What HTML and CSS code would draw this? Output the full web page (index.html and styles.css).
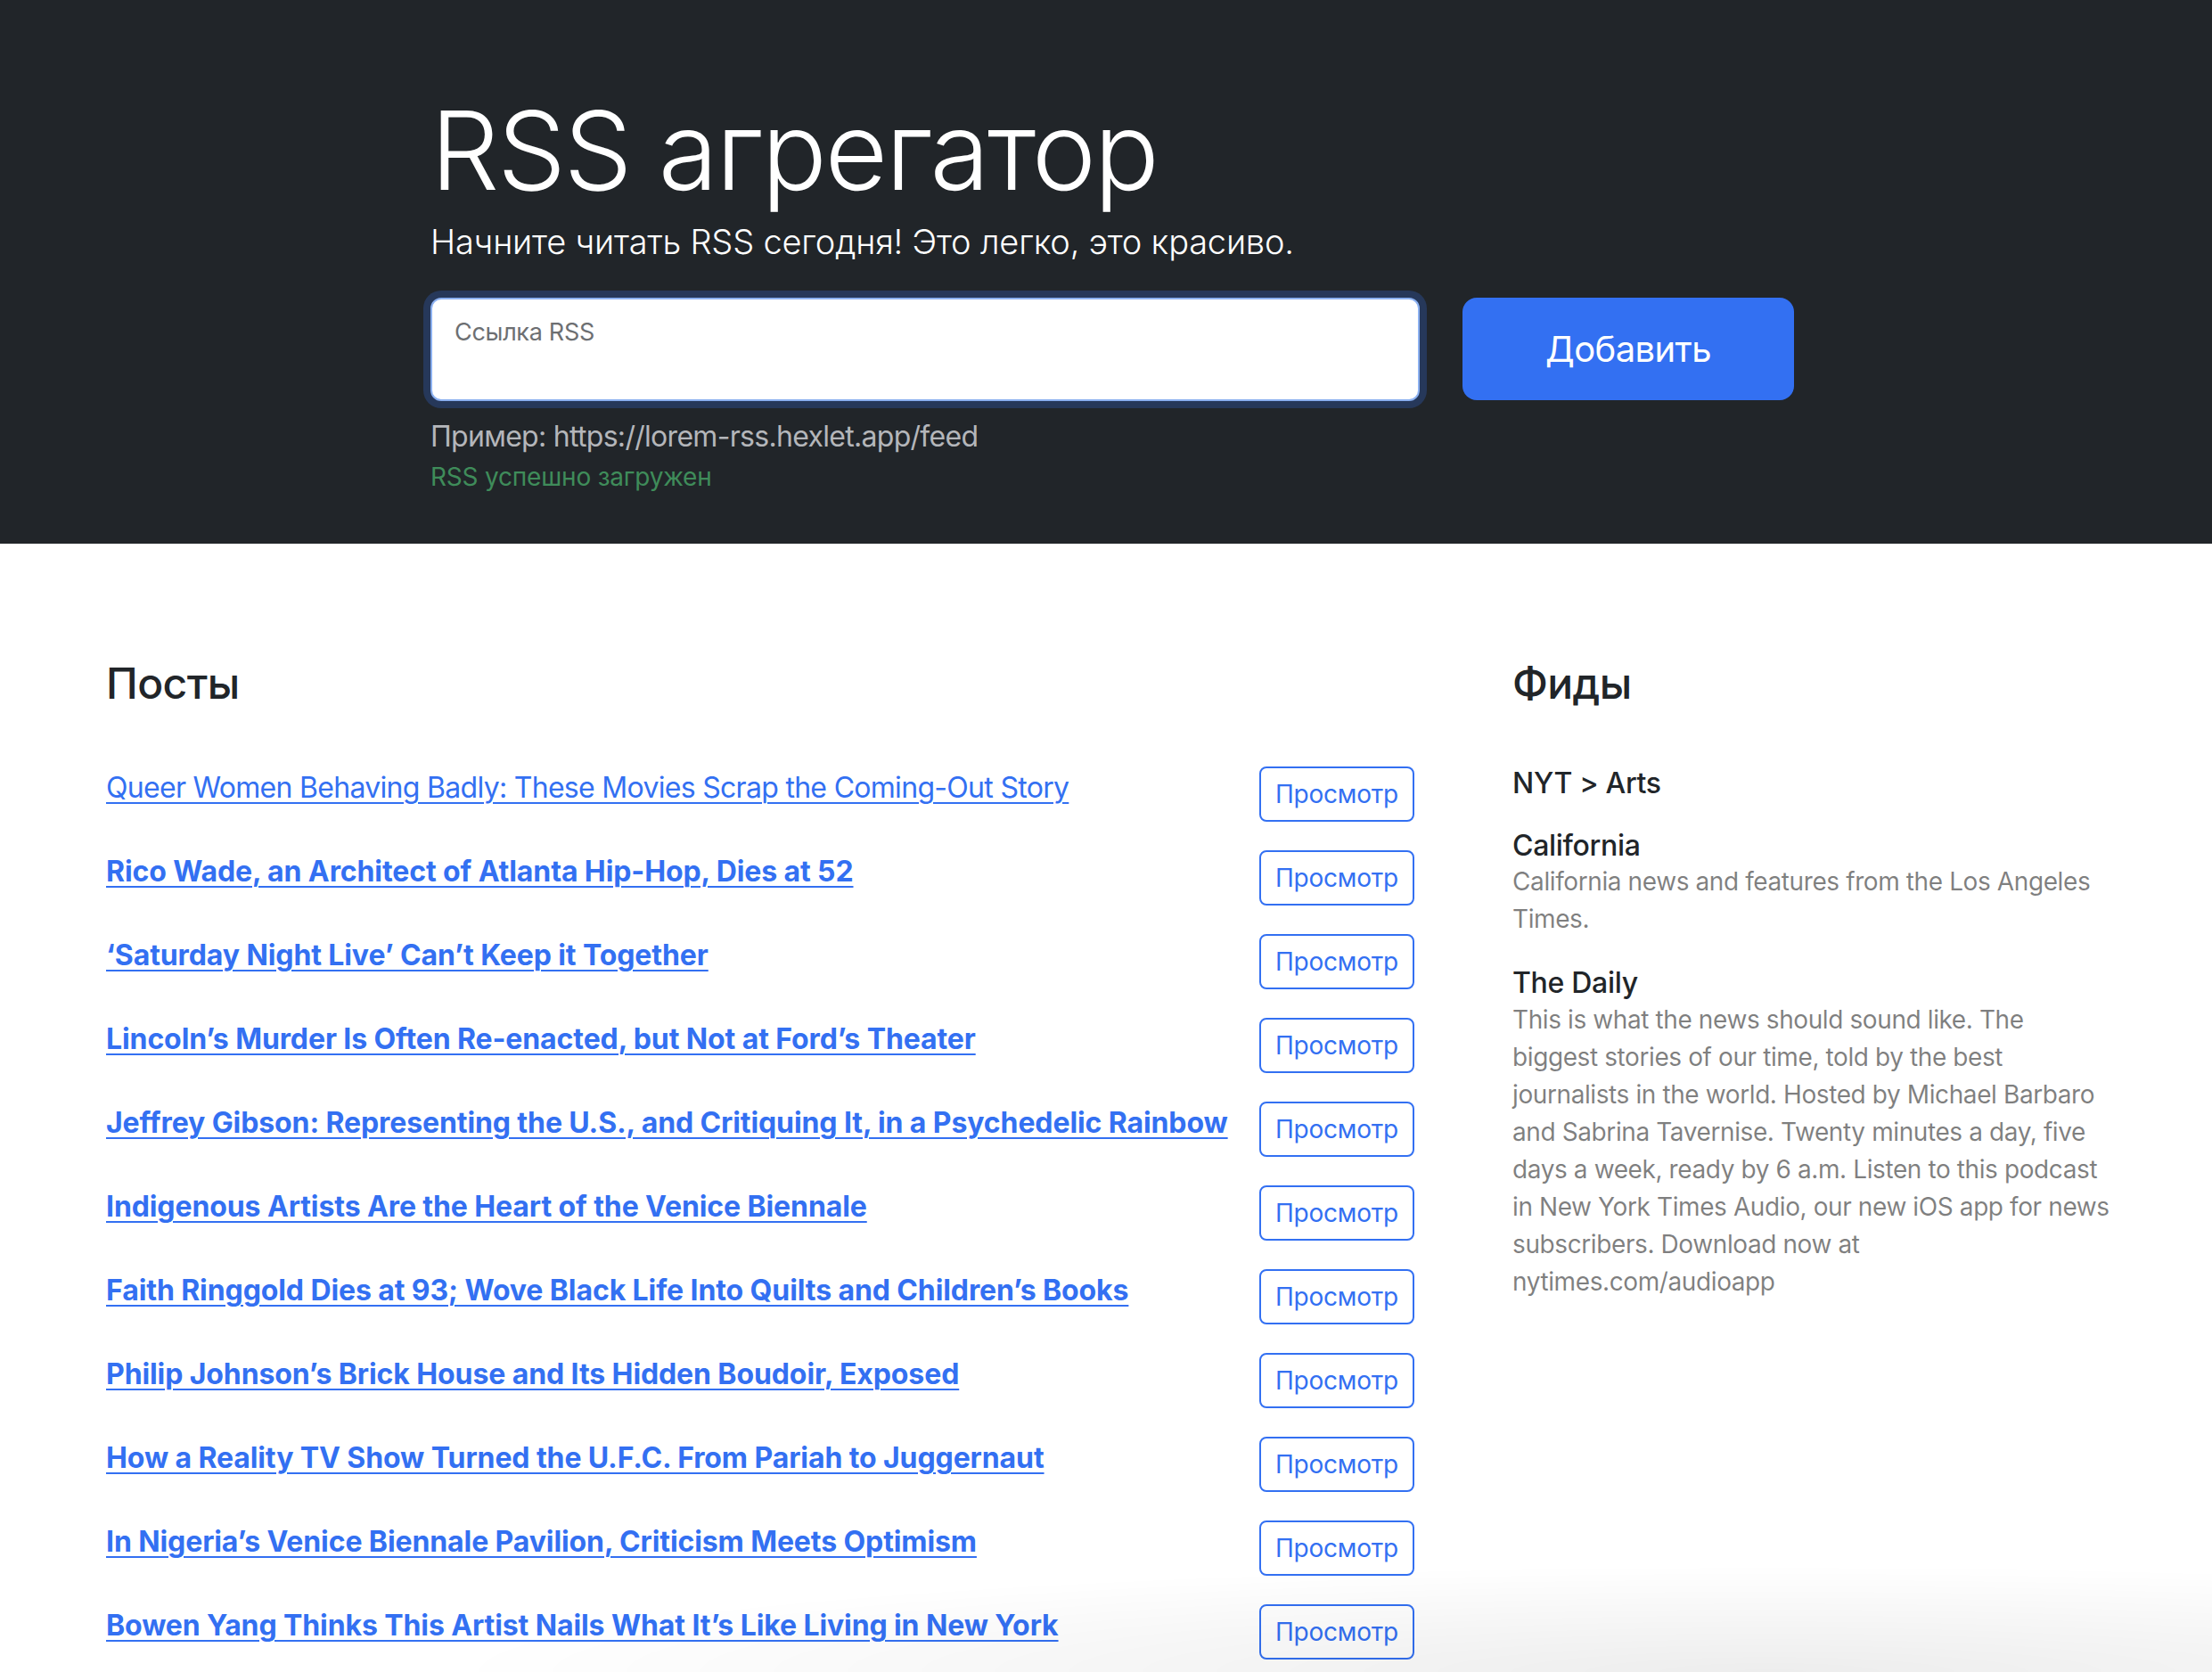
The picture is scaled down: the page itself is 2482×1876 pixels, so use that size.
FILE: index.html
```html
<!DOCTYPE html>
<html lang="ru">
<head>
<meta charset="utf-8">
<title>RSS агрегатор</title>
<link rel="stylesheet" href="styles.css">
</head>
<body>
<section class="hero">
  <div class="hero-inner">
    <h1 class="hero-title">RSS агрегатор</h1>
    <p class="hero-lead">Начните читать RSS сегодня! Это легко, это красиво.</p>
    <form class="rss-form">
      <div class="field">
        <label class="field-label">Ссылка RSS</label>
      </div>
      <button type="button" class="btn-add">Добавить</button>
    </form>
    <p class="hero-example">Пример: https://lorem-rss.hexlet.app/feed</p>
    <p class="hero-feedback">RSS успешно загружен</p>
  </div>
</section>
<main class="content">
  <div class="posts">
    <h2 class="card-title">Посты</h2>
    <ul class="post-list">
      <li class="post"><a href="#" class="post-link read">Queer Women Behaving Badly: These Movies Scrap the Coming-Out Story</a><button class="btn-view">Просмотр</button></li>
      <li class="post"><a href="#" class="post-link">Rico Wade, an Architect of Atlanta Hip-Hop, Dies at 52</a><button class="btn-view">Просмотр</button></li>
      <li class="post"><a href="#" class="post-link">‘Saturday Night Live’ Can’t Keep it Together</a><button class="btn-view">Просмотр</button></li>
      <li class="post"><a href="#" class="post-link">Lincoln’s Murder Is Often Re-enacted, but Not at Ford’s Theater</a><button class="btn-view">Просмотр</button></li>
      <li class="post"><a href="#" class="post-link">Jeffrey Gibson: Representing the U.S., and Critiquing It, in a Psychedelic Rainbow</a><button class="btn-view">Просмотр</button></li>
      <li class="post"><a href="#" class="post-link">Indigenous Artists Are the Heart of the Venice Biennale</a><button class="btn-view">Просмотр</button></li>
      <li class="post"><a href="#" class="post-link">Faith Ringgold Dies at 93; Wove Black Life Into Quilts and Children’s Books</a><button class="btn-view">Просмотр</button></li>
      <li class="post"><a href="#" class="post-link">Philip Johnson’s Brick House and Its Hidden Boudoir, Exposed</a><button class="btn-view">Просмотр</button></li>
      <li class="post"><a href="#" class="post-link">How a Reality TV Show Turned the U.F.C. From Pariah to Juggernaut</a><button class="btn-view">Просмотр</button></li>
      <li class="post"><a href="#" class="post-link">In Nigeria’s Venice Biennale Pavilion, Criticism Meets Optimism</a><button class="btn-view">Просмотр</button></li>
      <li class="post"><a href="#" class="post-link">Bowen Yang Thinks This Artist Nails What It’s Like Living in New York</a><button class="btn-view">Просмотр</button></li>
    </ul>
  </div>
  <div class="feeds">
    <h2 class="card-title">Фиды</h2>
    <ul class="feed-list">
      <li class="feed"><h3 class="feed-title">NYT &gt; Arts</h3><p class="feed-desc"></p></li>
      <li class="feed"><h3 class="feed-title">California</h3><p class="feed-desc">California news and features from the Los Angeles Times.</p></li>
      <li class="feed"><h3 class="feed-title">The Daily</h3><p class="feed-desc">This is what the news should sound like. The biggest stories of our time, told by the best journalists in the world. Hosted by Michael Barbaro and Sabrina Tavernise. Twenty minutes a day, five days a week, ready by 6 a.m. Listen to this podcast in New York Times Audio, our new iOS app for news subscribers. Download now at nytimes.com/audioapp</p></li>
    </ul>
  </div>
</main>
<div class="bottom-shade"></div>
</body>
</html>
```

FILE: styles.css
```css
* { box-sizing: border-box; }
html, body { margin: 0; padding: 0; }
body {
  font-family: Inter, "Noto Sans", "Liberation Sans", sans-serif;
  font-size: 32px;
  line-height: 1.5;
  color: #212529;
  background: #fff;
}

.hero {
  background: #212529;
  padding: 94px 0 54px 483px;
  color: #fff;
}
.hero-inner { width: 1530px; }
.hero-title {
  margin: 0;
  font-size: 122px;
  font-weight: 300;
  line-height: 150px;
  letter-spacing: -2.5px;
}
.hero-lead {
  margin: 0 0 35px;
  font-size: 38px;
  font-weight: 300;
  line-height: 55px;
  letter-spacing: -0.2px;
}
.rss-form {
  display: flex;
  gap: 48px;
  height: 116px;
}
.field {
  flex: 1;
  background: #fff;
  border: 2px solid #8bb0f0;
  border-radius: 12px;
  box-shadow: 0 0 0 8px #26385a;
  padding: 22px 25px;
}
.field-label {
  display: block;
  font-size: 27px;
  line-height: 30px;
  letter-spacing: -0.3px;
  color: #6d6f72;
}
.btn-add {
  width: 372px;
  height: 115px;
  border: 0;
  border-radius: 16px;
  background: #3370f2;
  color: #fff;
  font-family: inherit;
  font-size: 40px;
  font-weight: 400;
  letter-spacing: -0.6px;
}
.hero-example {
  margin: 16px 0 0;
  font-size: 32px;
  line-height: 48px;
  letter-spacing: -0.7px;
  color: #b4b6ba;
}
.hero-feedback {
  margin: 0;
  font-size: 28px;
  line-height: 42px;
  letter-spacing: -0.2px;
  color: #3f8c5a;
}

.content {
  display: flex;
  gap: 46px;
  padding: 96px 81px 0 87px;
}
.posts { width: 1532px; flex: none; }
.feeds { flex: 1; }
.card-title {
  margin: 0;
  padding: 32px 32px 16px;
  font-size: 48px;
  font-weight: 500;
  line-height: 57.6px;
  letter-spacing: -0.6px;
  margin-bottom: 32px;
}
.post-list, .feed-list {
  list-style: none;
  margin: 0;
  padding: 0;
}
.post {
  display: flex;
  justify-content: space-between;
  align-items: flex-start;
  padding: 16px 32px;
}
.post-link {
  color: #3370f2;
  font-weight: 700;
  text-decoration: underline;
  text-decoration-thickness: 2px;
  text-underline-offset: 5px;
  line-height: 48px;
  letter-spacing: -0.1px;
}
.post-link.read {
  font-weight: 400;
  letter-spacing: -0.7px;
}
.btn-view {
  flex: none;
  height: 62px;
  padding: 8px 16px;
  border: 2px solid #3370f2;
  border-radius: 8px;
  background: #fff;
  color: #3370f2;
  font-family: inherit;
  font-size: 28px;
  line-height: 42px;
  letter-spacing: -0.2px;
}

.feed { padding: 16px 32px; }
.feed-title {
  margin: 0;
  font-size: 32px;
  font-weight: 500;
  line-height: 38.4px;
  letter-spacing: -0.3px;
}
.feed-desc {
  margin: 0;
  font-size: 28px;
  line-height: 42px;
  letter-spacing: -0.4px;
  color: rgba(0, 0, 0, 0.5);
}

.bottom-shade {
  position: fixed;
  left: 0;
  right: 0;
  bottom: 0;
  height: 120px;
  pointer-events: none;
  background: radial-gradient(ellipse 60% 100% at 80% 100%, rgba(0, 0, 0, 0.07), rgba(0, 0, 0, 0) 100%);
}
```
